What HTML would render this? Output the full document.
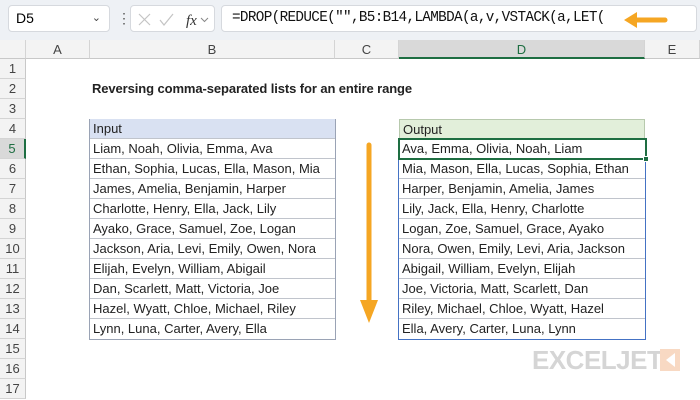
<!DOCTYPE html>
<html><head><style>
*{margin:0;padding:0;box-sizing:border-box}
body{width:700px;height:400px;overflow:hidden;background:#fff;font-family:"Liberation Sans",Calibri,sans-serif;position:relative}
.top{position:absolute;left:0;top:0;width:700px;height:40px;background:#eef1f5}
.box{position:absolute;background:#fff;border:1px solid #d6d9de;border-radius:4px}
.ch{position:absolute;top:40px;height:19px;background:#f3f3f3;border-right:1px solid #d4d4d4;border-bottom:1px solid #c8c8c8;font-size:13px;color:#444;text-align:center;line-height:19px}
.rh{position:absolute;left:0;width:26px;height:20px;background:#f3f3f3;border-bottom:1px solid #d4d4d4;border-right:1px solid #c8c8c8;font-size:13px;color:#444;text-align:center;line-height:20px}
.c{position:absolute;height:20px;font-size:13px;line-height:20px;padding-left:3px;color:#222;white-space:nowrap;border-bottom:1px solid #c0c4cc}
</style></head><body>
<div class="top"></div>
<div class="box" style="left:8px;top:5px;width:102px;height:27px;font-size:14px;line-height:25px;padding-left:7px">D5<span style="position:absolute;right:8px;top:0;font-size:11px;color:#444">&#8964;</span></div>
<div style="position:absolute;left:117px;top:12px;font-size:14px;color:#555;line-height:12px">&#8942;</div>
<div class="box" style="left:130px;top:5px;width:85px;height:27px">
<svg width="85" height="27" style="position:absolute;left:0;top:0"><path d="M8 8l11 11M19 8L8 19M29 14l4 5 9-11" stroke="#c4c4c4" stroke-width="1.2" fill="none"/><text x="55" y="19" font-family="Liberation Serif" font-style="italic" font-size="15" fill="#333">fx</text><path d="M70 12l3.5 3.5 3.5-3.5" stroke="#888" fill="none"/></svg></div>
<div class="box" style="left:221px;top:5px;width:476px;height:27px;font-family:'Liberation Mono','DejaVu Sans Mono',monospace;font-size:14.3px;line-height:25px;padding-left:10px;color:#111;letter-spacing:-0.65px">=DROP(REDUCE("",B5:B14,LAMBDA(a,v,VSTACK(a,LET(</div>
<svg style="position:absolute;left:620px;top:10px" width="50" height="20"><path d="M45 10H12" stroke="#f5a623" stroke-width="5" stroke-linecap="round"/><path d="M4 10l13-8v16z" fill="#f5a623"/></svg>
<div class="ch" style="left:0;width:26px;background:#f3f3f3"></div>
<div class="ch" style="left:26px;width:64px">A</div>
<div class="ch" style="left:90px;width:245px">B</div>
<div class="ch" style="left:335px;width:64px">C</div>
<div class="ch" style="left:399px;width:246px;background:#d9d9d9;color:#1e6e42;border-bottom:2px solid #1e6e42">D</div>
<div class="ch" style="left:645px;width:55px">E</div>
<div class="rh" style="top:59px">1</div><div class="rh" style="top:79px">2</div><div class="rh" style="top:99px">3</div><div class="rh" style="top:119px">4</div>
<div class="rh" style="top:139px;background:#d9d9d9;color:#1e6e42;border-right:2px solid #1e6e42">5</div>
<div class="rh" style="top:159px">6</div><div class="rh" style="top:179px">7</div><div class="rh" style="top:199px">8</div><div class="rh" style="top:219px">9</div><div class="rh" style="top:239px">10</div><div class="rh" style="top:259px">11</div><div class="rh" style="top:279px">12</div><div class="rh" style="top:299px">13</div><div class="rh" style="top:319px">14</div><div class="rh" style="top:339px">15</div><div class="rh" style="top:359px">16</div><div class="rh" style="top:379px">17</div>
<div style="position:absolute;left:92px;top:79px;font-size:13px;line-height:20px;font-weight:bold;color:#222;letter-spacing:-0.1px">Reversing comma-separated lists for an entire range</div>
<div style="position:absolute;left:89px;top:119px;width:247px;height:221px;border:1px solid #9aa3b5"></div>
<div class="c" style="left:90px;top:119px;width:245px;background:#d9e1f2">Input</div>
<div class="c" style="left:90px;top:139px;width:245px">Liam, Noah, Olivia, Emma, Ava</div>
<div class="c" style="left:90px;top:159px;width:245px">Ethan, Sophia, Lucas, Ella, Mason, Mia</div>
<div class="c" style="left:90px;top:179px;width:245px">James, Amelia, Benjamin, Harper</div>
<div class="c" style="left:90px;top:199px;width:245px">Charlotte, Henry, Ella, Jack, Lily</div>
<div class="c" style="left:90px;top:219px;width:245px">Ayako, Grace, Samuel, Zoe, Logan</div>
<div class="c" style="left:90px;top:239px;width:245px">Jackson, Aria, Levi, Emily, Owen, Nora</div>
<div class="c" style="left:90px;top:259px;width:245px">Elijah, Evelyn, William, Abigail</div>
<div class="c" style="left:90px;top:279px;width:245px">Dan, Scarlett, Matt, Victoria, Joe</div>
<div class="c" style="left:90px;top:299px;width:245px">Hazel, Wyatt, Chloe, Michael, Riley</div>
<div class="c" style="left:90px;top:319px;width:245px;border:none">Lynn, Luna, Carter, Avery, Ella</div>
<svg style="position:absolute;left:358px;top:140px" width="22" height="185"><path d="M11 5V160" stroke="#f5a623" stroke-width="5" stroke-linecap="round"/><path d="M2 160h18l-9 23z" fill="#f5a623"/></svg>
<div style="position:absolute;left:398px;top:139px;width:248px;height:201px;border:1px solid #4472c4"></div>
<div class="c" style="left:399px;top:119px;width:246px;background:#e2efda;border:1px solid #b7c9ad;border-bottom:none">Output</div>
<div class="c" style="left:399px;top:159px;width:246px">Mia, Mason, Ella, Lucas, Sophia, Ethan</div>
<div class="c" style="left:399px;top:179px;width:246px">Harper, Benjamin, Amelia, James</div>
<div class="c" style="left:399px;top:199px;width:246px">Lily, Jack, Ella, Henry, Charlotte</div>
<div class="c" style="left:399px;top:219px;width:246px">Logan, Zoe, Samuel, Grace, Ayako</div>
<div class="c" style="left:399px;top:239px;width:246px">Nora, Owen, Emily, Levi, Aria, Jackson</div>
<div class="c" style="left:399px;top:259px;width:246px">Abigail, William, Evelyn, Elijah</div>
<div class="c" style="left:399px;top:279px;width:246px">Joe, Victoria, Matt, Scarlett, Dan</div>
<div class="c" style="left:399px;top:299px;width:246px">Riley, Michael, Chloe, Wyatt, Hazel</div>
<div class="c" style="left:399px;top:319px;width:246px;border:none">Ella, Avery, Carter, Luna, Lynn</div>
<div class="c" style="left:398px;top:138px;width:249px;height:22px;border:2px solid #1e6e42;line-height:18px;padding-left:2px">Ava, Emma, Olivia, Noah, Liam</div>
<div style="position:absolute;left:643px;top:156px;width:6px;height:6px;background:#1e6e42;border:1px solid #fff"></div>
<div style="position:absolute;left:532px;top:345px;font-size:26px;font-weight:bold;color:#d5d5d5;letter-spacing:-0.5px;line-height:30px">EXCELJET</div>
<div style="position:absolute;left:660px;top:349px;width:20px;height:22px;background:#f8d9c3"><svg width="20" height="22"><path d="M6 11L15 4v14z" fill="#fff"/></svg></div>
</body></html>
